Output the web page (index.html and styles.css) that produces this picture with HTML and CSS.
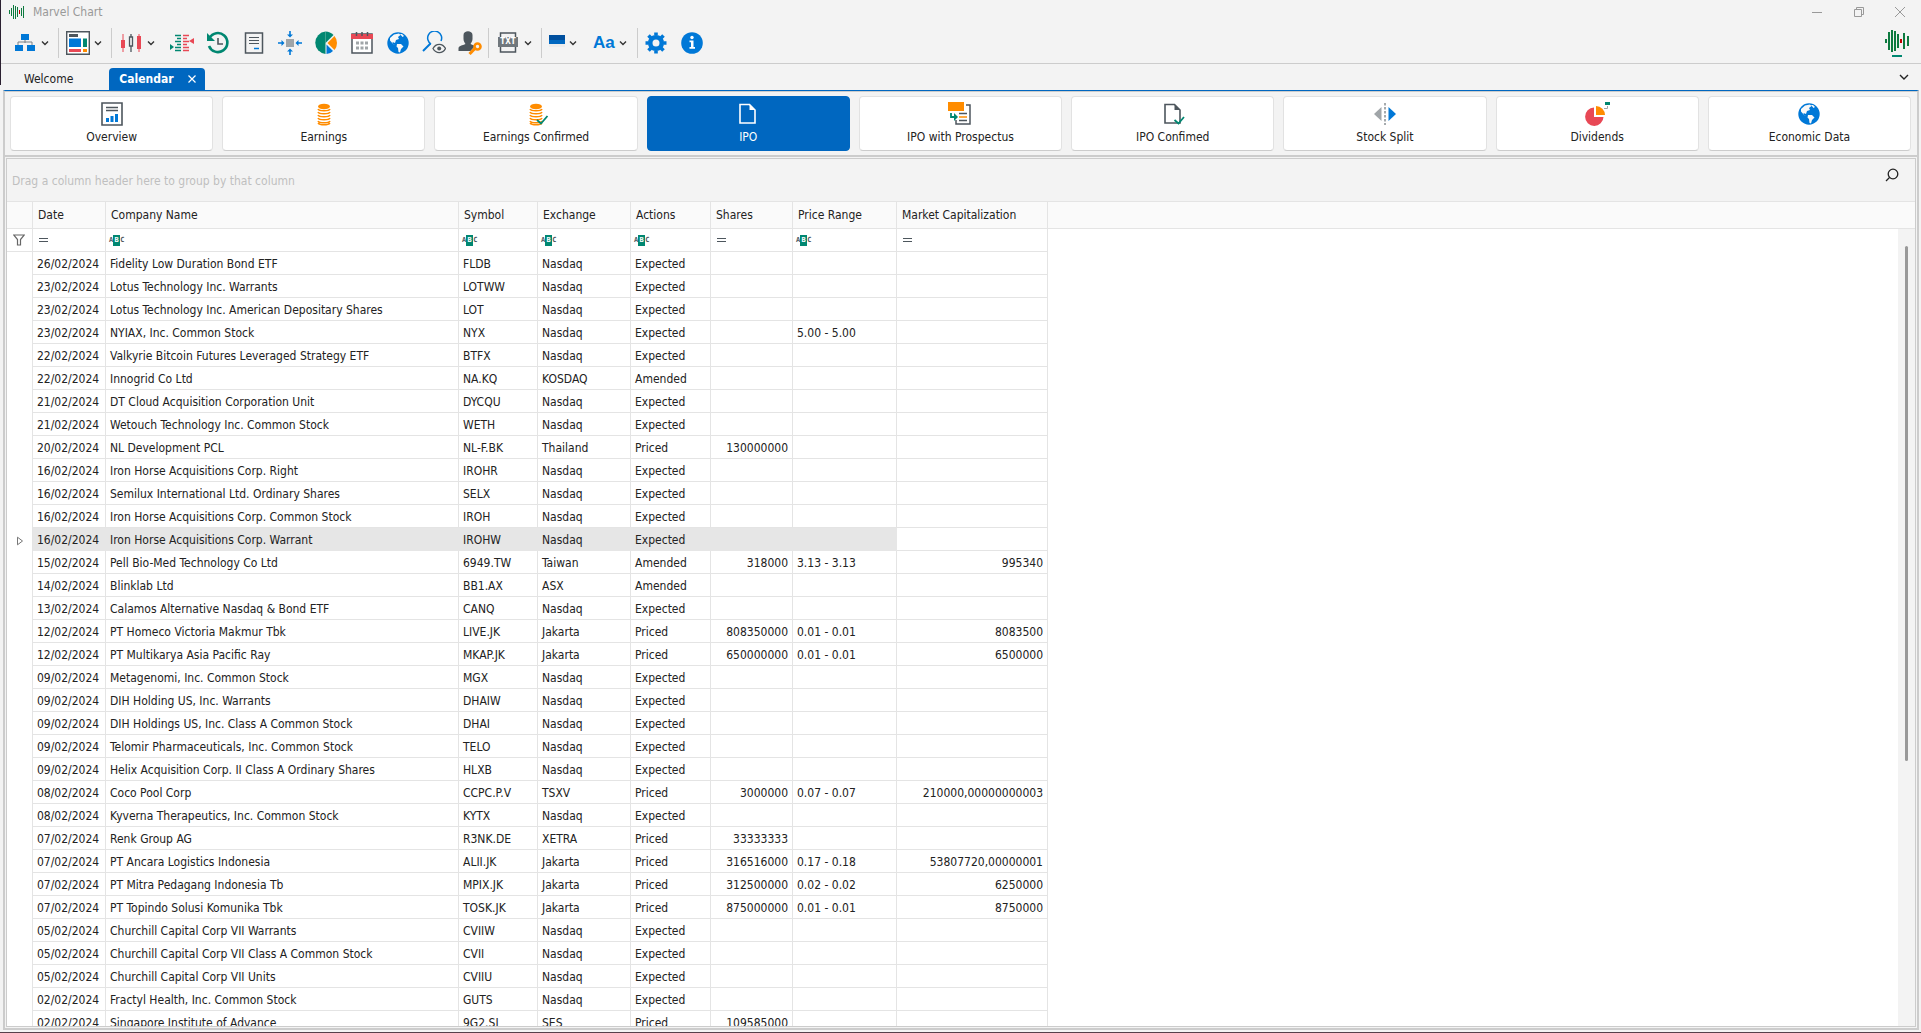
FILE: index.html
```html
<!DOCTYPE html>
<html lang="en">
<head>
<meta charset="utf-8">
<title>Marvel Chart</title>
<link rel="stylesheet" href="styles.css">
</head>
<body>
<svg class="defs" width="0" height="0" aria-hidden="true">
  <symbol id="chev" viewBox="0 0 10 10"><path d="M2 3.5 5 6.5 8 3.5" fill="none" stroke="#333" stroke-width="1.4"/></symbol>
  <symbol id="globe" viewBox="0 0 24 24"><circle cx="12" cy="12" r="10.7" fill="#0078d7"/><path d="M4 7 8 3.500 13 2.500 14.500 4 12 6 13 8 10 9 9 12 6.500 11 7 13 9 14 7.500 13.500 4 9.500ZM14 3 16 3 18 5 16.500 6ZM11 13 15 13 17.500 15.500 15 18 14 21.500 12.500 21 12 17 10.500 15.500Z" fill="#f8f8f8"/></symbol>
  <symbol id="coins" viewBox="0 0 24 24"><ellipse cx="12" cy="4.500" rx="6" ry="2.800" fill="#ff8c00"/><path d="M6 7c1 2.400 11 2.400 12 0M6 10c1 2.400 11 2.400 12 0M6 13c1 2.400 11 2.400 12 0M6 16c1 2.400 11 2.400 12 0M6 19c1 2.400 11 2.400 12 0M6 21c2 2.400 10 2.400 12 0" fill="none" stroke="#ff8c00" stroke-width="1.500"/></symbol>
  <symbol id="page" viewBox="0 0 24 24"><path d="M4 2.500H13.500L19 8V21H4Z" fill="none" stroke="currentColor" stroke-width="1.600"/><path d="M13.500 2.500V8H19Z" fill="currentColor"/></symbol>
</svg>

<header class="titlebar">
  <svg class="app-icon" viewBox="0 0 16 16"><path d="M.5 6v4M2.500 4v8M4.500 1v14M6.500 2v13M8.500 3v10M12.500 4v8M14.500 2v12" stroke="#0d7a3f"/><path d="M10.500 6v4" stroke="#c00000"/></svg>
  <h1>Marvel Chart</h1>
  <div class="window-controls">
    <button aria-label="Minimize"><svg viewBox="0 0 12 12"><path d="M1 6.500H11" /></svg></button>
    <button aria-label="Restore"><svg viewBox="0 0 12 12"><path d="M1.500 3.500H8.500V10.500H1.500ZM3.500 3.500V1.500H10.500V8.500H8.500"/></svg></button>
    <button aria-label="Close"><svg viewBox="0 0 12 12"><path d="M1 1 11 11M11 1 1 11"/></svg></button>
  </div>
</header>

<div class="toolbar" role="toolbar" aria-label="Main">
  <button class="split" aria-label="Workspaces"><svg viewBox="0 0 24 24"><path d="M12 8v4M5 14v-3H19v3" fill="none" stroke="#7a8085"/><path d="M8 3h8v6H8ZM2 14h8v6H2ZM14 14h8v6H14Z" fill="#0078d7"/></svg><svg class="chev"><use href="#chev"/></svg></button>
  <span class="sep"></span>
  <button class="split" aria-label="Layout"><svg viewBox="0 0 24 24"><path d="M.7.700H23.300V23.300H.7Z" fill="#fff" stroke="#4d565d" stroke-width="1.400"/><path d="M3 3h9v3H3Z" fill="#4d565d"/><path d="M3 7.500h12v8.500H3Z" fill="#0078d7"/><path d="M17 7.500h4v8.500h-4Z" fill="#008771"/><path d="M3 18h12v3H3Z" fill="#e84855"/><path d="M17 18h4v3h-4Z" fill="#ff8c00"/></svg><svg class="chev"><use href="#chev"/></svg></button>
  <span class="sep"></span>
  <button class="split" aria-label="Chart type"><svg viewBox="0 0 24 24"><path d="M4 3v18M20 3v18" stroke="#e84855"/><path d="M2 9h4v8H2ZM18 5h4v13h-4Z" fill="#e84855"/><path d="M12 3v3M12 15v6M10.500 6h3v9h-3Z" fill="none" stroke="#4d565d" stroke-width="1.300"/></svg><svg class="chev"><use href="#chev"/></svg></button>
  <button aria-label="Market depth"><svg viewBox="0 0 24 24"><path d="M5 4.500h6M7 7.500h4M5 10.500h6M7 13.500h4M5 16.500h6M5 19.500h6" stroke="#008771" stroke-width="1.500"/><path d="M13 4.500h6M13 7.500h4M13 10.500h6M13 13.500h4M13 16.500h6M13 19.500h6" stroke="#e84855" stroke-width="1.500"/><path d="M0 13v6l4-3Z" fill="#008771"/><path d="M24 7v6l-5-3Z" fill="#e84855"/></svg></button>
  <button aria-label="History"><svg viewBox="0 0 24 24"><path d="M3.500 7A9.500 9.500 0 1 1 3 15" fill="none" stroke="#008771" stroke-width="2.600"/><path d="M1 2v8h8Z" fill="#008771"/><path d="M12 7v6h5" fill="none" stroke="#4d565d" stroke-width="1.600"/></svg></button>
  <button aria-label="Notes"><svg viewBox="0 0 24 24"><path d="M3.500 2H20.500V22H3.500Z" fill="none" stroke="#4d565d" stroke-width="1.500"/><path d="M7 6.500h10M7 9.500h10M7 12.500h10" stroke="#4d565d"/><path d="M12 17.500h5" stroke="#0078d7" stroke-width="1.500"/></svg></button>
  <button aria-label="Fit to center"><svg viewBox="0 0 24 24"><path d="M8 8h8v8H8Z" fill="#a0a5a8"/><path d="M12 0v5M12 19v5M0 12h5M19 12h5" stroke="#0078d7" stroke-width="1.600"/><path d="M9 3.500l3 3 3-3ZM9 20.500l3-3 3 3ZM3.500 9l3 3-3 3ZM20.500 9l-3 3 3 3Z" fill="#0078d7"/></svg></button>
  <button aria-label="Sectors"><svg viewBox="0 0 24 24"><path d="M11.500.500A11.300 11.300 0 0 0 11.500 23Z" fill="#008771"/><path d="M11.500.500a11 11 0 0 1 8 3.500l-8 8Z" fill="#008771"/><path d="M20.500 5a11 11 0 0 1 0 14l-7-7Z" fill="#ff8c00"/><path d="M12.500 13.500l6.500 6.500a9 9 0 0 1-6.500 3Z" fill="#0078d7"/></svg></button>
  <button aria-label="Calendar"><svg viewBox="0 0 24 24"><path d="M2 3H22V22H2Z" fill="#fff" stroke="#4d565d" stroke-width="1.500"/><path d="M1 3H23V8H1Z" fill="#e84855"/><path d="M6.500 1v4M12 1v4M17.500 1v4" stroke="#4d565d" stroke-width="1.500"/><path d="M6 12h12M6 17h12" stroke="#a0a5a8" stroke-width="3" stroke-dasharray="3 1.500"/></svg></button>
  <button aria-label="World markets"><svg><use href="#globe"/></svg></button>
  <button aria-label="Watch search"><svg viewBox="0 0 24 24"><path d="M8.500 12.500 1 20" stroke="#0078d7" stroke-width="2"/><path d="M9 13A7 7 0 1 1 19 10" fill="none" stroke="#0078d7" stroke-width="1.500"/><path d="M11 17.500c3-5.500 9.500-5.500 12.500 0-3 5.500-9.500 5.500-12.500 0Z" fill="#f3f3f3" stroke="#4d565d" stroke-width="1.300"/><circle cx="17.200" cy="17.500" r="2" fill="#4d565d"/></svg></button>
  <button aria-label="Account access"><svg viewBox="0 0 24 24"><path d="M5.500 4c0-5 9-5 9 0v4c0 2.500-1.500 4-2 5l4.500 2-4.500 5H.5v-2.500c0-3 4-3 7-4.500-.5-1-2-2.500-2-5Z" fill="#4d565d"/><path d="M11.500 23 18 16.500" stroke="#ff8c00" stroke-width="3"/><circle cx="19.500" cy="15.500" r="3" fill="none" stroke="#ff8c00" stroke-width="2.600"/></svg></button>
  <span class="sep"></span>
  <button class="split" aria-label="Export text"><span class="txt-icon"><svg viewBox="0 0 24 24"><path d="M4.500 6V2H19.500V6M4.500 16V21H19.500V16" fill="none" stroke="#4d565d" stroke-width="1.500"/><path d="M2 6H22V16H2Z" fill="#70777c"/></svg><b>TXT</b></span><svg class="chev"><use href="#chev"/></svg></button>
  <span class="sep"></span>
  <button class="split theme" aria-label="Color theme"><svg viewBox="0 0 16 24"><path d="M0 4h16v5H0Z" fill="#004f9e"/><path d="M0 9h16v4H0Z" fill="#0067c0"/><path d="M0 13h16v3H0Z" fill="#ececec"/></svg><svg class="chev"><use href="#chev"/></svg></button>
  <button class="split font" aria-label="Font size"><span>Aa</span><svg class="chev"><use href="#chev"/></svg></button>
  <span class="sep"></span>
  <button aria-label="Settings"><svg viewBox="0 0 24 24"><circle cx="12" cy="12" r="5.800" fill="none" stroke="#0078d7" stroke-width="4.600"/><path d="M12 1.500v3M12 19.500v3M1.500 12h3M19.500 12h3M4.500 4.500l2.500 2.500M17 17l2.500 2.500M19.500 4.500 17 7M7 17l-2.500 2.500" stroke="#0078d7" stroke-width="3.600"/></svg></button>
  <button aria-label="About"><svg viewBox="0 0 24 24"><circle cx="12" cy="12" r="10.800" fill="#0078d7"/><circle cx="12" cy="6.500" r="1.700" fill="#fff"/><path d="M9.500 9.500h4V16h1.500v1.800H9.500V16H11v-4.800H9.500Z" fill="#fff"/></svg></button>
  <svg class="brand" viewBox="0 0 24 28"><path d="M1 10v4M4 3v18M7 1v22M10 2v20M13 5v14M19 4v16M23 7v10" stroke="#0d7a3f" stroke-width="2"/><path d="M16 10v4" stroke="#c00000" stroke-width="2"/><path d="M7 27h10" stroke="#008771" stroke-width="2"/></svg>
</div>

<div class="tabs">
  <button class="tab">Welcome</button>
  <button class="tab active">Calendar<svg viewBox="0 0 8 8"><path d="M.5.500 7.500 7.500M7.500.500.5 7.500" stroke="#fff" stroke-width="1.200"/></svg></button>
  <button class="tab-list" aria-label="Open tabs"><svg viewBox="0 0 10 10"><path d="M1 3 5 7 9 3" fill="none" stroke="#222" stroke-width="1.400"/></svg></button>
</div>

<main class="workspace">
  <nav class="views">
    <button><svg viewBox="0 0 24 24"><path d="M2 1H22V23H2Z" fill="#fff" stroke="#4d565d" stroke-width="1.600"/><path d="M6 5.500h12M6 8.500h12" stroke="#4d565d" stroke-width="1.300"/><path d="M6 16h3v4H6ZM10.500 14h3v6h-3ZM15 12h3v8h-3Z" fill="#0078d7"/></svg>Overview</button>
    <button><svg><use href="#coins"/></svg>Earnings</button>
    <button><svg viewBox="0 0 24 24"><use href="#coins" width="24" height="24"/><path d="M13 18l4 3.500L23.500 14" fill="none" stroke="#008771" stroke-width="1.800"/></svg>Earnings Confirmed</button>
    <button class="current"><svg><use href="#page"/></svg>IPO</button>
    <button><svg viewBox="0 0 24 24"><path d="M18 3h4V22H8V18" fill="none" stroke="#4d565d" stroke-width="1.500"/><path d="M0 0h16v9H0Z" fill="#ff8c00"/><path d="M3 11v4h4" fill="none" stroke="#008771" stroke-width="1.800"/><path d="M6 11v8l4-4Z" fill="#008771"/><path d="M11 11.500h8M11 18.500h8" stroke="#4d565d" stroke-width="1.300"/><path d="M11 15h8" stroke="#ff8c00" stroke-width="1.500"/></svg>IPO with Prospectus</button>
    <button><svg viewBox="0 0 24 24"><use href="#page" width="24" height="24"/><path d="M13.500 18l4 3.500L23 15" fill="none" stroke="#008771" stroke-width="1.800"/></svg>IPO Confimed</button>
    <button><svg viewBox="0 0 24 24"><path d="M8.500 5v14L1 12Z" fill="#a0a5a8"/><path d="M15.500 5v14L23 12Z" fill="#0078d7"/><path d="M12 1v22" stroke="#4d565d" stroke-dasharray="2.500 1.500"/></svg>Stock Split</button>
    <button><svg viewBox="0 0 24 24"><path d="M9 5.500V15h9.500A9.200 9.200 0 1 1 9 5.500Z" fill="#e84855"/><path d="M11 4a9 9 0 0 1 9 9h-9Z" fill="#ff8c00"/><path d="M20 0h5v3h-5Z" fill="#008771"/><path d="M22.500 4v2.500H19" fill="none" stroke="#a0a5a8"/></svg>Dividends</button>
    <button><svg><use href="#globe"/></svg>Economic Data</button>
  </nav>

  <section class="grid">
    <div class="group-panel"><span>Drag a column header here to group by that column</span><button aria-label="Search"><svg viewBox="0 0 14 14"><circle cx="8" cy="6" r="4.800"/><path d="M4.500 9.500 1 13"/></svg></button></div>
    <div class="scroller">
      <table>
        <colgroup><col class="c-mark"><col class="c-date"><col class="c-name"><col class="c-symbol"><col class="c-exchange"><col class="c-actions"><col class="c-shares"><col class="c-price"><col class="c-cap"><col></colgroup>
        <thead>
          <tr><th></th><th>Date</th><th>Company Name</th><th>Symbol</th><th>Exchange</th><th>Actions</th><th>Shares</th><th>Price Range</th><th>Market Capitalization</th><th></th></tr>
          <tr class="filters">
            <td><svg class="funnel" viewBox="0 0 12 12"><path d="M.7 1H11.300L7.500 5.500V11H4.500V5.500Z"/></svg></td>
            <td><label><span class="eq"></span><input aria-label="Filter date"></label></td>
            <td><label><span class="abc">A<b>B</b>C</span><input aria-label="Filter company name"></label></td>
            <td><label><span class="abc">A<b>B</b>C</span><input aria-label="Filter symbol"></label></td>
            <td><label><span class="abc">A<b>B</b>C</span><input aria-label="Filter exchange"></label></td>
            <td><label><span class="abc">A<b>B</b>C</span><input aria-label="Filter actions"></label></td>
            <td><label><span class="eq"></span><input aria-label="Filter shares"></label></td>
            <td><label><span class="abc">A<b>B</b>C</span><input aria-label="Filter price range"></label></td>
            <td><label><span class="eq"></span><input aria-label="Filter market capitalization"></label></td>
            <td></td>
          </tr>
        </thead>
        <tbody>
          <tr><td></td><td>26/02/2024</td><td>Fidelity Low Duration Bond ETF</td><td>FLDB</td><td>Nasdaq</td><td>Expected</td><td></td><td></td><td></td><td></td></tr>
          <tr><td></td><td>23/02/2024</td><td>Lotus Technology Inc. Warrants</td><td>LOTWW</td><td>Nasdaq</td><td>Expected</td><td></td><td></td><td></td><td></td></tr>
          <tr><td></td><td>23/02/2024</td><td>Lotus Technology Inc. American Depositary Shares</td><td>LOT</td><td>Nasdaq</td><td>Expected</td><td></td><td></td><td></td><td></td></tr>
          <tr><td></td><td>23/02/2024</td><td>NYIAX, Inc. Common Stock</td><td>NYX</td><td>Nasdaq</td><td>Expected</td><td></td><td>5.00 - 5.00</td><td></td><td></td></tr>
          <tr><td></td><td>22/02/2024</td><td>Valkyrie Bitcoin Futures Leveraged Strategy ETF</td><td>BTFX</td><td>Nasdaq</td><td>Expected</td><td></td><td></td><td></td><td></td></tr>
          <tr><td></td><td>22/02/2024</td><td>Innogrid Co Ltd</td><td>NA.KQ</td><td>KOSDAQ</td><td>Amended</td><td></td><td></td><td></td><td></td></tr>
          <tr><td></td><td>21/02/2024</td><td>DT Cloud Acquisition Corporation Unit</td><td>DYCQU</td><td>Nasdaq</td><td>Expected</td><td></td><td></td><td></td><td></td></tr>
          <tr><td></td><td>21/02/2024</td><td>Wetouch Technology Inc. Common Stock</td><td>WETH</td><td>Nasdaq</td><td>Expected</td><td></td><td></td><td></td><td></td></tr>
          <tr><td></td><td>20/02/2024</td><td>NL Development PCL</td><td>NL-F.BK</td><td>Thailand</td><td>Priced</td><td>130000000</td><td></td><td></td><td></td></tr>
          <tr><td></td><td>16/02/2024</td><td>Iron Horse Acquisitions Corp. Right</td><td>IROHR</td><td>Nasdaq</td><td>Expected</td><td></td><td></td><td></td><td></td></tr>
          <tr><td></td><td>16/02/2024</td><td>Semilux International Ltd. Ordinary Shares</td><td>SELX</td><td>Nasdaq</td><td>Expected</td><td></td><td></td><td></td><td></td></tr>
          <tr><td></td><td>16/02/2024</td><td>Iron Horse Acquisitions Corp. Common Stock</td><td>IROH</td><td>Nasdaq</td><td>Expected</td><td></td><td></td><td></td><td></td></tr>
          <tr class="focused"><td><svg class="marker" viewBox="0 0 8 10"><path d="M1.500 1.200 6.500 5 1.500 8.800Z"/></svg></td><td>16/02/2024</td><td>Iron Horse Acquisitions Corp. Warrant</td><td>IROHW</td><td>Nasdaq</td><td>Expected</td><td></td><td></td><td></td><td></td></tr>
          <tr><td></td><td>15/02/2024</td><td>Pell Bio-Med Technology Co Ltd</td><td>6949.TW</td><td>Taiwan</td><td>Amended</td><td>318000</td><td>3.13 - 3.13</td><td>995340</td><td></td></tr>
          <tr><td></td><td>14/02/2024</td><td>Blinklab Ltd</td><td>BB1.AX</td><td>ASX</td><td>Amended</td><td></td><td></td><td></td><td></td></tr>
          <tr><td></td><td>13/02/2024</td><td>Calamos Alternative Nasdaq &amp; Bond ETF</td><td>CANQ</td><td>Nasdaq</td><td>Expected</td><td></td><td></td><td></td><td></td></tr>
          <tr><td></td><td>12/02/2024</td><td>PT Homeco Victoria Makmur Tbk</td><td>LIVE.JK</td><td>Jakarta</td><td>Priced</td><td>808350000</td><td>0.01 - 0.01</td><td>8083500</td><td></td></tr>
          <tr><td></td><td>12/02/2024</td><td>PT Multikarya Asia Pacific Ray</td><td>MKAP.JK</td><td>Jakarta</td><td>Priced</td><td>650000000</td><td>0.01 - 0.01</td><td>6500000</td><td></td></tr>
          <tr><td></td><td>09/02/2024</td><td>Metagenomi, Inc. Common Stock</td><td>MGX</td><td>Nasdaq</td><td>Expected</td><td></td><td></td><td></td><td></td></tr>
          <tr><td></td><td>09/02/2024</td><td>DIH Holding US, Inc. Warrants</td><td>DHAIW</td><td>Nasdaq</td><td>Expected</td><td></td><td></td><td></td><td></td></tr>
          <tr><td></td><td>09/02/2024</td><td>DIH Holdings US, Inc. Class A Common Stock</td><td>DHAI</td><td>Nasdaq</td><td>Expected</td><td></td><td></td><td></td><td></td></tr>
          <tr><td></td><td>09/02/2024</td><td>Telomir Pharmaceuticals, Inc. Common Stock</td><td>TELO</td><td>Nasdaq</td><td>Expected</td><td></td><td></td><td></td><td></td></tr>
          <tr><td></td><td>09/02/2024</td><td>Helix Acquisition Corp. II Class A Ordinary Shares</td><td>HLXB</td><td>Nasdaq</td><td>Expected</td><td></td><td></td><td></td><td></td></tr>
          <tr><td></td><td>08/02/2024</td><td>Coco Pool Corp</td><td>CCPC.P.V</td><td>TSXV</td><td>Priced</td><td>3000000</td><td>0.07 - 0.07</td><td>210000,00000000003</td><td></td></tr>
          <tr><td></td><td>08/02/2024</td><td>Kyverna Therapeutics, Inc. Common Stock</td><td>KYTX</td><td>Nasdaq</td><td>Expected</td><td></td><td></td><td></td><td></td></tr>
          <tr><td></td><td>07/02/2024</td><td>Renk Group AG</td><td>R3NK.DE</td><td>XETRA</td><td>Priced</td><td>33333333</td><td></td><td></td><td></td></tr>
          <tr><td></td><td>07/02/2024</td><td>PT Ancara Logistics Indonesia</td><td>ALII.JK</td><td>Jakarta</td><td>Priced</td><td>316516000</td><td>0.17 - 0.18</td><td>53807720,00000001</td><td></td></tr>
          <tr><td></td><td>07/02/2024</td><td>PT Mitra Pedagang Indonesia Tb</td><td>MPIX.JK</td><td>Jakarta</td><td>Priced</td><td>312500000</td><td>0.02 - 0.02</td><td>6250000</td><td></td></tr>
          <tr><td></td><td>07/02/2024</td><td>PT Topindo Solusi Komunika Tbk</td><td>TOSK.JK</td><td>Jakarta</td><td>Priced</td><td>875000000</td><td>0.01 - 0.01</td><td>8750000</td><td></td></tr>
          <tr><td></td><td>05/02/2024</td><td>Churchill Capital Corp VII Warrants</td><td>CVIIW</td><td>Nasdaq</td><td>Expected</td><td></td><td></td><td></td><td></td></tr>
          <tr><td></td><td>05/02/2024</td><td>Churchill Capital Corp VII Class A Common Stock</td><td>CVII</td><td>Nasdaq</td><td>Expected</td><td></td><td></td><td></td><td></td></tr>
          <tr><td></td><td>05/02/2024</td><td>Churchill Capital Corp VII Units</td><td>CVIIU</td><td>Nasdaq</td><td>Expected</td><td></td><td></td><td></td><td></td></tr>
          <tr><td></td><td>02/02/2024</td><td>Fractyl Health, Inc. Common Stock</td><td>GUTS</td><td>Nasdaq</td><td>Expected</td><td></td><td></td><td></td><td></td></tr>
          <tr><td></td><td>02/02/2024</td><td>Singapore Institute of Advance</td><td>9G2.SI</td><td>SES</td><td>Priced</td><td>109585000</td><td></td><td></td><td></td></tr>
        </tbody>
      </table>
      <div class="scrollbar"><div class="thumb"></div></div>
    </div>
  </section>
</main>
</body>
</html>
```
FILE: styles.css
```css
* { box-sizing: border-box; }

body {
  margin: 0;
  height: 100vh;
  display: flex;
  flex-direction: column;
  overflow: hidden;
  background: #f3f3f3;
  border-bottom: 1px solid #55404a;
  color: #222;
  font: 12px/16px "DejaVu Sans Condensed", "DejaVu Sans", sans-serif;
}

/* sliver of the desktop showing at the window's left edge */
body::before {
  content: "";
  position: absolute;
  left: 0;
  top: 0;
  width: 1px;
  height: 85px;
  background: #2a2030;
}

.defs { position: absolute; }

button {
  margin: 0;
  padding: 0;
  border: 0;
  background: none;
  color: inherit;
  font: inherit;
}

svg { display: block; flex: none; }

/* title bar */
.titlebar {
  display: flex;
  align-items: center;
  height: 23px;
  padding: 0 1px 0 9px;
  flex: none;
}
.app-icon { width: 16px; height: 16px; }
.titlebar h1 {
  margin: 0 0 0 8px;
  font-size: 12px;
  font-weight: normal;
  color: #999;
}
.window-controls { margin-left: auto; display: flex; }
.window-controls button {
  width: 42px;
  height: 23px;
  display: grid;
  place-items: center;
}
.window-controls button:last-child { width: 40px; }
.window-controls svg {
  width: 12px;
  height: 12px;
  fill: none;
  stroke: #999;
}

/* toolbar */
.toolbar {
  display: flex;
  align-items: center;
  height: 41px;
  padding: 0 12px 0 6px;
  border-bottom: 1px solid #ccc;
  flex: none;
}
.toolbar button {
  width: 36px;
  height: 36px;
  display: flex;
  align-items: center;
  justify-content: center;
}
.toolbar button svg { width: 24px; height: 24px; }
.toolbar .split {
  width: auto;
  padding: 0 8px 0 7px;
  gap: 3px;
}
.toolbar .font { padding-right: 9px; }
.toolbar .split .chev { width: 10px; height: 10px; }
.toolbar .theme svg:first-child { width: 16px; }
.sep {
  width: 1px;
  height: 30px;
  background: #ccc;
}
.txt-icon { display: grid; place-items: center; }
.txt-icon > * { grid-area: 1 / 1; }
.txt-icon b {
  color: #fff;
  padding-bottom: 2px;
  font: bold 8px/8px "DejaVu Sans Condensed", sans-serif;
}
.font span {
  color: #0078d7;
  font: bold 17px/24px "Liberation Sans", Arial, sans-serif;
}
.brand { width: 24px; height: 28px; margin-left: auto; }

/* document tabs */
.tabs {
  display: flex;
  align-items: flex-end;
  height: 26px;
  padding: 0 12px 0 4px;
  flex: none;
}
.tab { height: 22px; padding: 0 20px; }
.tab.active {
  display: flex;
  align-items: center;
  gap: 14px;
  margin-left: 16px;
  padding: 0 9px 0 10px;
  border-radius: 4px 4px 0 0;
  background: #0067c0;
  color: #fff;
  font-weight: bold;
}
.tab.active svg { width: 8px; height: 8px; }
.tab-list {
  width: 10px;
  height: 26px;
  margin-left: auto;
  display: grid;
  place-items: center;
}
.tab-list svg { width: 10px; height: 10px; }

/* workspace */
.workspace {
  flex: 1;
  min-height: 0;
  display: flex;
  flex-direction: column;
  margin: 0 2px 2px 3px;
  border: 2px solid #ccc;
  border-top: 1px solid #0067c0;
}
.views {
  display: grid;
  grid-template-columns: repeat(9, 1fr);
  gap: 9px;
  padding: 4px 6px 4px 5px;
  border-top: 1px solid #ccc;
  border-bottom: 2px solid #ccc;
  flex: none;
}
.views button {
  display: flex;
  flex-direction: column;
  align-items: center;
  gap: 3px;
  height: 55px;
  padding-top: 5px;
  border: 1px solid #e2e2e2;
  border-bottom-color: #ccc;
  border-radius: 4px;
  background: #fff;
}
.views svg { width: 24px; height: 24px; overflow: visible; color: #4d565d; }
.views .current { background: #0067c0; border-color: #0067c0; color: #fff; }
.views .current svg { color: #fff; }

/* data grid */
.grid {
  flex: 1;
  min-height: 0;
  display: flex;
  flex-direction: column;
  margin: 1px;
  border: 1px solid #ccc;
}
.group-panel {
  display: flex;
  align-items: center;
  justify-content: space-between;
  height: 43px;
  padding: 2px 16px 0 5px;
  border-bottom: 1px solid #e4e4e4;
  color: #bfbfbf;
  flex: none;
}
.group-panel button { padding-bottom: 12px; }
.group-panel svg {
  width: 14px;
  height: 14px;
  fill: none;
  stroke: #222;
  stroke-width: 1.3;
}
.scroller {
  position: relative;
  flex: 1;
  min-height: 0;
  overflow: hidden;
  background: #fff;
}
table {
  width: 100%;
  table-layout: fixed;
  border-collapse: separate;
  border-spacing: 0;
}
.c-mark { width: 26px; }
.c-date { width: 73px; }
.c-name { width: 353px; }
.c-symbol { width: 79px; }
.c-exchange { width: 93px; }
.c-actions { width: 80px; }
.c-shares { width: 82px; }
.c-price { width: 104px; }
.c-cap { width: 151px; }

th, td {
  height: 23px;
  padding: 0 4px;
  border-right: 1px solid #e4e4e4;
  border-bottom: 1px solid #e4e4e4;
  text-align: left;
  white-space: nowrap;
}
tbody td { padding-top: 2px; }
th {
  height: 27px;
  padding: 0 5px;
  background: #fafafa;
  font-weight: normal;
}
th:last-child, td:last-child { border-right: 0; }
td:last-child, tbody td:first-child { border-bottom: 0; }
tbody td:nth-child(7), tbody td:nth-child(9) { text-align: right; }

.focused td:nth-child(n+2):nth-child(-n+8) {
  background: #e6e6e6;
  border-color: #e6e6e6;
}
.marker {
  width: 8px;
  height: 10px;
  margin-left: 5px;
  fill: none;
  stroke: #777;
}
.funnel {
  width: 12px;
  height: 12px;
  margin-left: 3px;
  fill: none;
  stroke: #666;
  stroke-width: 1.2;
}

.filters label { display: flex; align-items: center; height: 22px; }
.filters td { padding: 0 3px; }
.filters input {
  flex: 1;
  min-width: 0;
  height: 20px;
  padding: 0 4px;
  border: 0;
  outline: 0;
  background: none;
  font: inherit;
}
.eq {
  width: 9px;
  height: 4px;
  margin-left: 3px;
  border: solid #4d565d;
  border-width: 1px 0;
}
.abc {
  display: flex;
  align-items: center;
  color: #4d565d;
  font: bold 7px/11px "DejaVu Sans Mono", monospace;
}
.abc b {
  width: 7px;
  background: #008771;
  color: #fff;
  text-align: center;
}

.scrollbar {
  position: absolute;
  top: 27px;
  right: 0;
  bottom: 0;
  width: 17px;
  padding: 17px 7px 0;
  background: #f3f3f3;
}
.thumb {
  height: 66%;
  border-radius: 2px;
  background: #999;
}
```
